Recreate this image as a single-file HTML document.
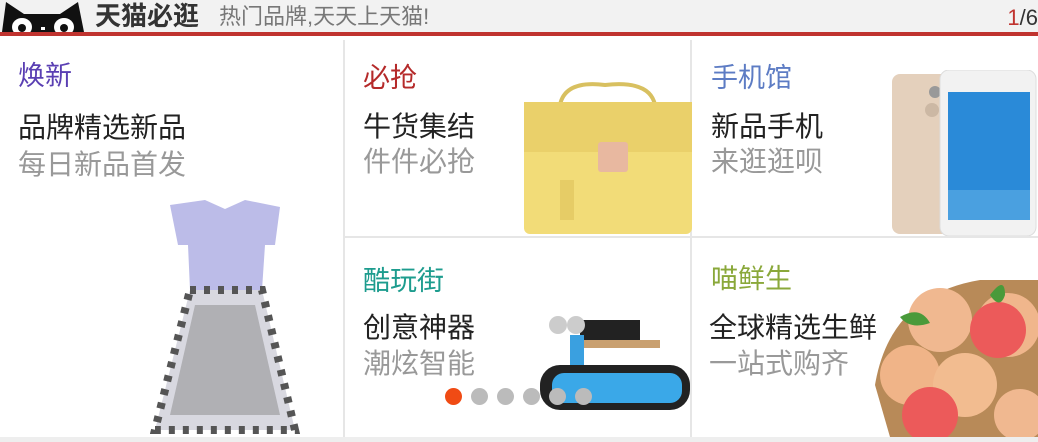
<!DOCTYPE html><html><head><meta charset="utf-8"><style>
*{margin:0;padding:0;box-sizing:border-box}
body{width:1038px;height:442px;overflow:hidden;background:#fff;font-family:"Liberation Sans","Noto Sans CJK SC",sans-serif;position:relative}
.hd{position:absolute;left:0;top:0;width:1038px;height:36px;background:#f2f2f2;border-bottom:4px solid #c0332f}
.t1{position:absolute;left:95px;top:0;font-size:26px;font-weight:bold;color:#333;line-height:33px}
.t2{position:absolute;left:219px;top:0;font-size:22px;color:#777;line-height:33px}
.pg{position:absolute;right:0;top:0;font-size:22px;line-height:35px;color:#333}.pg b{color:#c0332f;font-weight:normal}
.v{position:absolute;background:#e6e6e6;width:2px}
.h{position:absolute;background:#e6e6e6;height:2px}
.t{position:absolute;font-size:27px;line-height:30px;white-space:nowrap}
.m{color:#222;font-size:28px}
.s{color:#999;font-size:28px}
.dot{position:absolute;top:388px;width:17px;height:17px;border-radius:50%;background:#bbb}
</style></head><body>
<div class="hd"></div>
<svg style="position:absolute;left:0;top:0" width="86" height="32"><path d="M2 32 L6 2 L24 14 L60 14 L78 2 L84 32Z" fill="#111"/><ellipse cx="22" cy="27" rx="10" ry="9" fill="#fff"/><ellipse cx="64" cy="27" rx="10" ry="9" fill="#fff"/><circle cx="22" cy="28" r="4" fill="#111"/><circle cx="64" cy="28" r="4" fill="#111"/><rect x="41" y="27" width="4" height="3" fill="#fff"/></svg>
<div class="t1">天猫必逛</div><div class="t2">热门品牌,天天上天猫!</div>
<div class="pg"><b>1</b>/6</div>
<div class="v" style="left:343px;top:40px;height:397px"></div>
<div class="v" style="left:690px;top:40px;height:397px"></div>
<div class="h" style="left:344px;top:236px;width:694px"></div>
<div class="h" style="left:0;top:437px;width:1038px;height:5px;background:#eee"></div>

<div class="t" style="left:18px;top:61px;color:#5a3fb3">焕新</div>
<div class="t m" style="left:18px;top:113px">品牌精选新品</div>
<div class="t s" style="left:18px;top:150px">每日新品首发</div>

<div class="t" style="left:363px;top:63px;color:#b52a2a">必抢</div>
<div class="t m" style="left:363px;top:112px">牛货集结</div>
<div class="t s" style="left:363px;top:147px">件件必抢</div>

<div class="t" style="left:711px;top:63px;color:#5d7cc4">手机馆</div>
<div class="t m" style="left:711px;top:112px">新品手机</div>
<div class="t s" style="left:711px;top:147px">来逛逛呗</div>

<div class="t" style="left:363px;top:266px;color:#1d9c8e">酷玩街</div>
<div class="t m" style="left:363px;top:313px">创意神器</div>
<div class="t s" style="left:363px;top:349px">潮炫智能</div>

<div class="t" style="left:711px;top:264px;color:#8aa83a">喵鲜生</div>
<div class="t m" style="left:709px;top:313px">全球精选生鲜</div>
<div class="t s" style="left:709px;top:349px">一站式购齐</div>

<svg style="position:absolute;left:150px;top:195px" width="150" height="240"><path d="M20 10 L55 5 L75 14 L95 5 L130 12 L125 50 L115 50 L112 95 L40 95 L38 50 L28 50Z" fill="#bcbce8"/><path d="M40 95 L112 95 L145 235 L5 235Z" fill="#d8d8e0"/><path d="M40 95 L112 95 L145 235 L5 235Z" fill="none" stroke="#555" stroke-width="8" stroke-dasharray="6 8"/><path d="M45 110 L105 110 L130 220 L20 220Z" fill="#888" opacity=".5"/></svg>
<svg style="position:absolute;left:520px;top:80px" width="172" height="155"><path d="M40 25 Q45 0 85 5 Q130 0 135 25" fill="none" stroke="#d8c060" stroke-width="4"/><rect x="4" y="22" width="168" height="132" rx="6" fill="#f2dc78"/><rect x="4" y="22" width="168" height="50" fill="#ead06a"/><rect x="78" y="62" width="30" height="30" rx="3" fill="#e8b8a0"/><rect x="40" y="100" width="14" height="40" fill="#e6cc66"/></svg>
<svg style="position:absolute;left:890px;top:70px" width="148" height="166"><rect x="2" y="4" width="60" height="160" rx="8" fill="#e4d0bc"/><circle cx="45" cy="22" r="6" fill="#999"/><circle cx="42" cy="40" r="7" fill="#ccb8a4"/><rect x="50" y="0" width="96" height="166" rx="9" fill="#f2f2f2" stroke="#ddd"/><rect x="58" y="22" width="82" height="128" fill="#2a8ad8"/><rect x="58" y="120" width="82" height="30" fill="#4aa0e0"/></svg>
<svg style="position:absolute;left:530px;top:305px" width="162" height="110"><rect x="50" y="15" width="60" height="25" fill="#222"/><rect x="40" y="35" width="90" height="8" fill="#c9a070"/><circle cx="28" cy="20" r="9" fill="#ccc"/><circle cx="46" cy="20" r="9" fill="#ccc"/><rect x="40" y="30" width="14" height="60" fill="#3aa0e0"/><rect x="10" y="60" width="150" height="45" rx="20" fill="#222"/><rect x="22" y="68" width="130" height="30" rx="12" fill="#3aa8e8"/></svg>
<svg style="position:absolute;left:870px;top:275px" width="168" height="162"><path d="M5 110 Q20 20 110 5 L168 5 L168 162 L20 162Z" fill="#b88a58"/><circle cx="70" cy="45" r="32" fill="#f0b890"/><circle cx="40" cy="100" r="30" fill="#f0b488"/><circle cx="95" cy="110" r="32" fill="#f2bc90"/><circle cx="138" cy="50" r="32" fill="#f0b68c"/><circle cx="128" cy="55" r="28" fill="#ec5a5a"/><circle cx="60" cy="140" r="28" fill="#ec5a5a"/><circle cx="150" cy="140" r="26" fill="#f0b890"/><path d="M30 42 Q50 30 60 48 Q40 55 30 42Z" fill="#4a9a3a"/><path d="M120 20 Q135 0 135 20 Q130 35 120 20Z" fill="#4a9a3a"/></svg>
<div class="dot" style="left:445px;background:#f04b14"></div><div class="dot" style="left:471px"></div><div class="dot" style="left:497px"></div><div class="dot" style="left:523px"></div><div class="dot" style="left:549px"></div><div class="dot" style="left:575px"></div>
</body></html>
